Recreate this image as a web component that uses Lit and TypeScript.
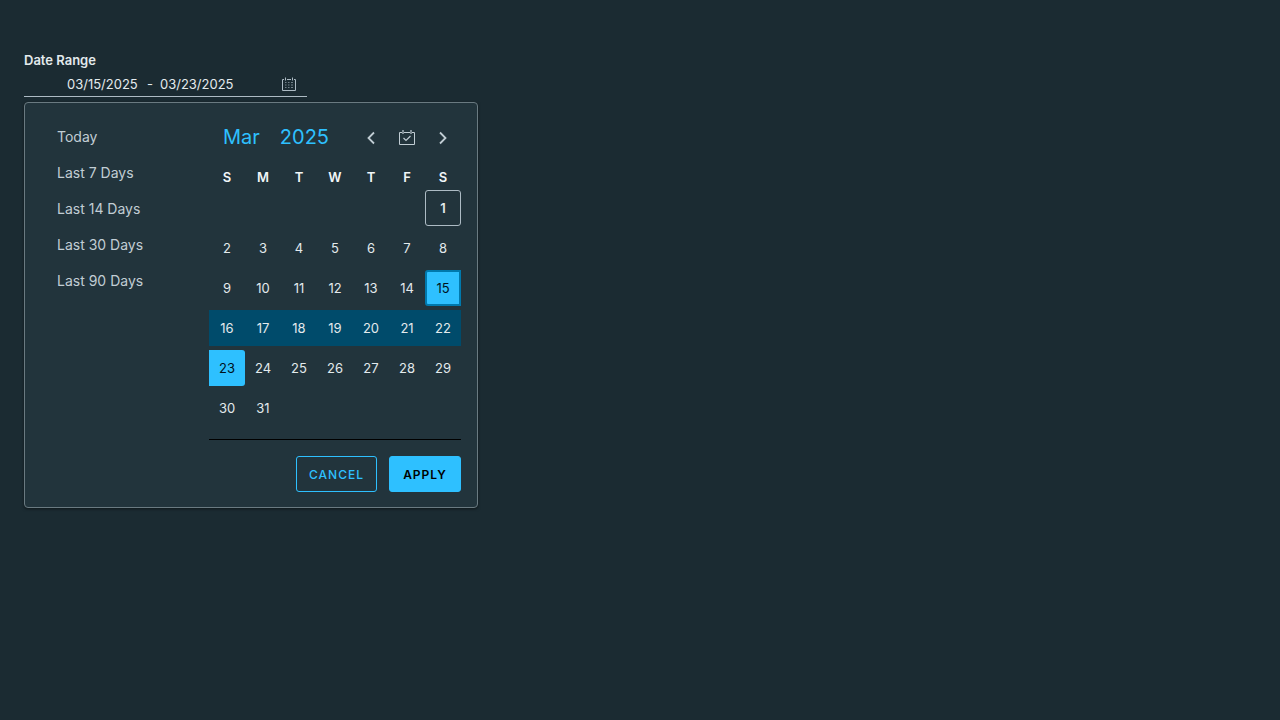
import { LitElement, html, css, nothing } from "lit";
import { customElement, property } from "lit/decorators.js";
import { classMap } from "lit/directives/class-map.js";

const PRESETS = ["Today", "Last 7 Days", "Last 14 Days", "Last 30 Days", "Last 90 Days"];
const WEEKDAYS = [
  ["Sunday", "S"],
  ["Monday", "M"],
  ["Tuesday", "T"],
  ["Wednesday", "W"],
  ["Thursday", "T"],
  ["Friday", "F"],
  ["Saturday", "S"],
];

@customElement("month-grid")
export class MonthGrid extends LitElement {
  @property({ type: Number }) year = 2025;
  @property({ type: Number }) month = 2;
  @property({ type: Number }) today = 1;
  @property({ type: Number }) from = 15;
  @property({ type: Number }) to = 23;

  static styles = css`
    :host {
      display: block;
    }
    table {
      width: 100%;
      table-layout: fixed;
      border-collapse: collapse;
    }
    th {
      height: 22px;
      padding: 0;
      font-size: 13px;
      line-height: 22px;
      font-weight: 600;
      color: #f1f6f8;
    }
    td {
      height: 36px;
      padding: 2px 0;
    }
    .day {
      display: block;
      box-sizing: border-box;
      width: 100%;
      height: 36px;
      padding: 0;
      border: 0 solid transparent;
      border-radius: 3px;
      background: none;
      color: #e3eaed;
      font: inherit;
      font-size: 13px;
      line-height: 18px;
      cursor: pointer;
    }
    .today {
      border: 1px solid #adbbc4;
      font-weight: 600;
    }
    .between {
      border-radius: 0;
      background: #004b6b;
    }
    .start,
    .end {
      background: #2ec0ff;
      color: #00131c;
    }
    .start {
      border: 2px solid #0079ad;
      border-radius: 3px 0 0 3px;
    }
    .end {
      border-radius: 0 3px 3px 0;
    }
  `;

  private weeks() {
    const lead = new Date(this.year, this.month, 1).getDay();
    const count = new Date(this.year, this.month + 1, 0).getDate();
    const rows: number[][] = [];
    for (let first = 1 - lead; first <= count; first += 7) {
      rows.push(WEEKDAYS.map((_, i) => (first + i > count ? 0 : first + i)));
    }
    return rows;
  }

  private day(n: number) {
    if (n < 1) return nothing;
    const classes = {
      day: true,
      today: n === this.today,
      start: n === this.from,
      between: n > this.from && n < this.to,
      end: n === this.to,
    };
    return html`<button type="button" class=${classMap(classes)}>${n}</button>`;
  }

  render() {
    return html`<table>
      <thead>
        <tr>
          ${WEEKDAYS.map(([name, letter]) => html`<th scope="col" abbr=${name}>${letter}</th>`)}
        </tr>
      </thead>
      <tbody>
        ${this.weeks().map((row) => html`<tr>${row.map((n) => html`<td>${this.day(n)}</td>`)}</tr>`)}
      </tbody>
    </table>`;
  }
}

@customElement("app-root")
export class AppRoot extends LitElement {
  static styles = css`
    :host {
      display: block;
      box-sizing: border-box;
      min-height: 100vh;
      padding: 48px 24px 24px;
      background: #1b2b32;
      color: #e3eaed;
      font-family: Inter, "Open Sans", sans-serif;
    }
    .label {
      display: block;
      font-size: 13px;
      line-height: 24px;
      font-weight: 600;
    }
    .field {
      display: flex;
      align-items: center;
      box-sizing: border-box;
      width: fit-content;
      height: 25px;
      padding: 0 8px 0 43px;
      border-bottom: 1px solid #adbbc4;
      font-size: 13px;
    }
    .date {
      box-sizing: border-box;
      width: 80px;
      height: 24px;
      padding: 0;
      border: 0;
      outline: 0;
      background: none;
      color: inherit;
      font: inherit;
    }
    .dash {
      width: 13px;
    }
    .toggle {
      display: flex;
      margin-left: 39px;
      padding: 2px;
      border: 0;
      background: none;
      color: #adbbc4;
    }
    .popup {
      display: flex;
      box-sizing: border-box;
      width: fit-content;
      margin-top: 5px;
      padding: 16px 16px 15px;
      border: 1px solid #6a7a81;
      border-radius: 4px;
      background: #22343c;
      box-shadow: 0 1px 3px rgba(0, 0, 0, 0.5);
    }
    .presets {
      width: 168px;
      margin: 0;
      padding: 0;
      list-style: none;
    }
    .preset {
      display: block;
      box-sizing: border-box;
      width: 100%;
      height: 36px;
      padding: 0 16px 2px;
      border: 0;
      background: none;
      color: #c1cdd4;
      font: inherit;
      font-size: 14px;
      text-align: left;
    }
    .calendar {
      width: 252px;
    }
    .header {
      display: flex;
      align-items: center;
      margin-bottom: 11px;
    }
    .pick {
      height: 36px;
      padding: 0 6px 0 14px;
      border: 0;
      background: none;
      color: #2ec0ff;
      font: inherit;
      font-size: 20px;
    }
    .steps {
      display: flex;
      margin-left: auto;
    }
    .step {
      display: flex;
      align-items: center;
      justify-content: center;
      box-sizing: border-box;
      width: 36px;
      height: 36px;
      padding: 2px 0 0;
      border: 0;
      background: none;
      color: #c1cdd4;
    }
    .actions {
      display: flex;
      justify-content: flex-end;
      gap: 12px;
      margin-top: 11px;
      padding-top: 16px;
      border-top: 1px solid #000;
    }
    .action {
      min-width: 72px;
      height: 36px;
      padding: 0 12px;
      border: 1px solid #2ec0ff;
      border-radius: 3px;
      background: none;
      color: #2ec0ff;
      font: inherit;
      font-size: 12px;
      font-weight: 500;
      letter-spacing: 1px;
      text-transform: uppercase;
    }
    .primary {
      background: #2ec0ff;
      color: #000;
      font-weight: 600;
    }
  `;

  render() {
    return html`
      <label class="label" for="from">Date Range</label>
      <div class="field">
        <input class="date" id="from" type="text" value="03/15/2025" />
        <span class="dash">-</span>
        <input class="date" type="text" value="03/23/2025" aria-label="End date" />
        <button class="toggle" type="button" aria-label="Choose dates">
          <svg width="16" height="16" viewBox="0 0 16 16" fill="none" stroke="currentColor">
            <path d="M3 3.500H1.500V14.500H14.500V3.500H13M6 3.500h4" />
            <path d="M4.500 1.500v3M11.500 1.500v3" />
            <path d="M4 6.500h1.500M7 6.500h1.500M10 6.500h2M4 9h1.500M7 9h1.500M10 9h2M4 11.500h1.500M7 11.500h1.500M10 11.500h2" opacity=".6" />
          </svg>
        </button>
      </div>
      <div class="popup">
        <ul class="presets">
          ${PRESETS.map((p) => html`<li><button class="preset" type="button">${p}</button></li>`)}
        </ul>
        <div class="calendar">
          <div class="header">
            <button class="pick" type="button">Mar</button>
            <button class="pick" type="button">2025</button>
            <div class="steps">
              <button class="step" type="button" aria-label="Previous month">
                <svg width="16" height="16" viewBox="0 0 16 16" fill="none" stroke="currentColor" stroke-width="1.8">
                  <path d="M11 2.500L5.500 8L11 13.500" />
                </svg>
              </button>
              <button class="step" type="button" aria-label="Current month">
                <svg width="18" height="18" viewBox="0 0 18 18" fill="none" stroke="currentColor">
                  <path d="M4 3.500H1.500V15.500H16.500V3.500H14M6 3.500h6" />
                  <path d="M5 1v4M13 1v4" stroke-width="2" opacity=".6" />
                  <path d="M5.500 9L8 11.500L12.500 7" stroke-width="1.200" />
                </svg>
              </button>
              <button class="step" type="button" aria-label="Next month">
                <svg width="16" height="16" viewBox="0 0 16 16" fill="none" stroke="currentColor" stroke-width="1.8">
                  <path d="M5 2.500L10.500 8L5 13.500" />
                </svg>
              </button>
            </div>
          </div>
          <month-grid></month-grid>
          <div class="actions">
            <button class="action" type="button">Cancel</button>
            <button class="action primary" type="button">Apply</button>
          </div>
        </div>
      </div>
    `;
  }
}
